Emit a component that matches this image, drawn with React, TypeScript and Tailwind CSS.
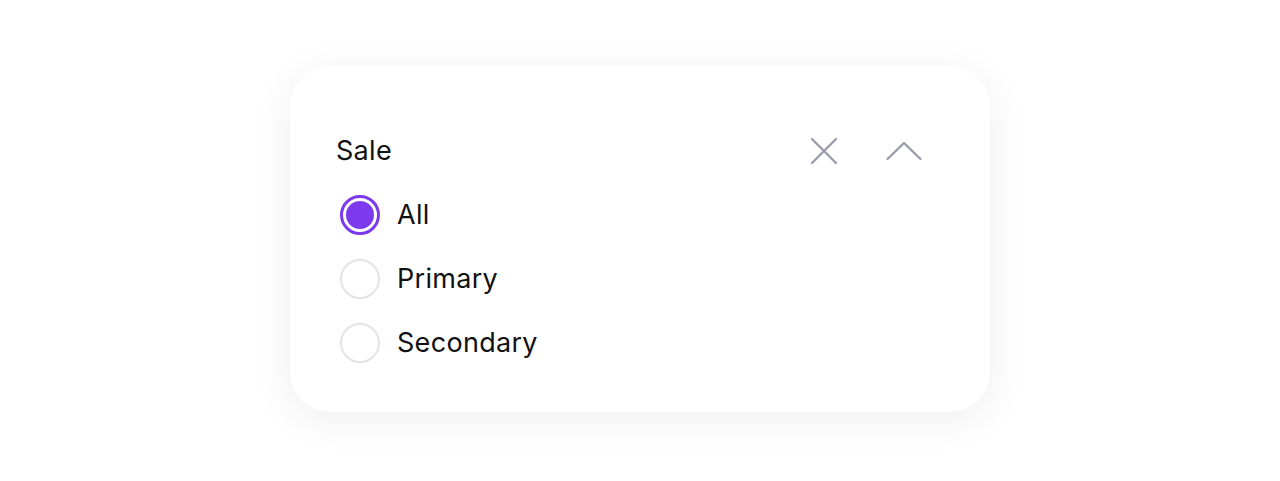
import React from "react";

const font = { fontFamily: "Inter, 'Noto Sans', sans-serif" };

function Radio({ checked, label }: { checked?: boolean; label: string }) {
  return (
    <div className="flex h-[64px] items-center">
      {checked ? (
        <div className="ml-[4px] flex h-[40px] w-[40px] items-center justify-center rounded-full border-[3px] border-[#7c3aed] bg-white">
          <div className="h-[28px] w-[28px] rounded-full bg-[#7c3aed]" />
        </div>
      ) : (
        <div className="ml-[4px] h-[40px] w-[40px] rounded-full border-2 border-[#e4e4e7] bg-white" />
      )}
      <span className="ml-[17px] text-[27px] leading-[32px] tracking-[0.3px] text-[#111113]">{label}</span>
    </div>
  );
}

export default function App() {
  return (
    <div className="flex h-[481px] w-full justify-center bg-white pt-[66px]" style={font}>
      <div className="h-[346px] w-[700px] rounded-[40px] bg-white pl-[46px] pr-[68px] pt-[53px] shadow-[0_8px_40px_rgba(0,0,0,0.07)]">
        <div className="flex h-[64px] items-center justify-between">
          <span className="text-[27px] leading-[32px] tracking-[0.3px] text-[#111113]">Sale</span>
          <div className="flex items-center gap-[48px]">
            <svg width="28" height="28" viewBox="0 0 28 28" fill="none" stroke="#9b9dac" strokeWidth="2.4" strokeLinecap="round">
              <line x1="2" y1="2" x2="26" y2="26" />
              <line x1="26" y1="2" x2="2" y2="26" />
            </svg>
            <svg width="36" height="20" viewBox="0 0 36 20" fill="none" stroke="#9b9dac" strokeWidth="2.4" strokeLinecap="round" strokeLinejoin="round">
              <polyline points="1.5,18 18,2 34.5,18" />
            </svg>
          </div>
        </div>
        <Radio checked label="All" />
        <Radio label="Primary" />
        <Radio label="Secondary" />
      </div>
    </div>
  );
}
